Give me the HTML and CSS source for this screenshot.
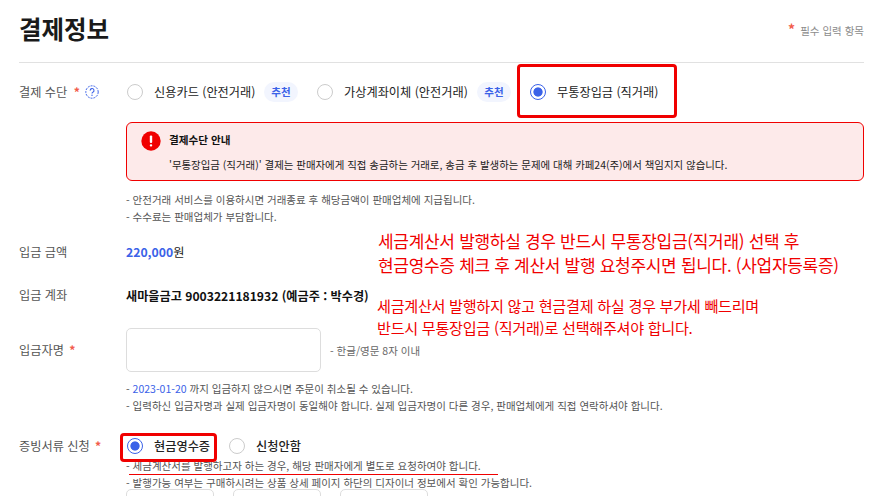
FILE: index.html
```html
<!DOCTYPE html>
<html lang="ko">
<head>
<meta charset="utf-8">
<title>결제정보</title>
<link rel="stylesheet" href="styles.css">
</head>
<body>
<main class="page">
  <header class="head">
    <h1 class="title">결제정보</h1>
    <p class="req-note"><span class="star star-big">*</span> 필수 입력 항목</p>
  </header>

  <section class="row row-method">
    <div class="label">결제 수단 <span class="star">*</span>
      <svg class="help" viewBox="0 0 14 14" width="14" height="14"><circle cx="7" cy="7" r="6.2" fill="none" stroke="#3b62e8" stroke-width="1" stroke-dasharray="2 1"/><path d="M5.2 5.6a1.9 1.9 0 1 1 2.7 1.6c-.6.3-.9.6-.9 1.3" fill="none" stroke="#3b62e8" stroke-width="1.1"/><circle cx="7" cy="10.2" r=".7" fill="#3b62e8"/></svg>
    </div>
    <div class="options">
      <span class="radio"></span><span class="opt-text w-card">신용카드 (안전거래)</span><span class="badge">추천</span>
      <span class="radio"></span><span class="opt-text w-virtual">가상계좌이체 (안전거래)</span><span class="badge">추천</span>
      <span class="radio checked"></span><span class="opt-text">무통장입금 (직거래)</span>
    </div>
    <div class="mark mark-bank"></div>
  </section>

  <section class="alert">
    <svg class="alert-icon" viewBox="0 0 20 20" width="20" height="20"><circle cx="10" cy="10" r="9.7" fill="#f00000"/><rect x="8.8" y="4.6" width="2.4" height="7.4" rx="1" fill="#fff"/><rect x="8.8" y="13.2" width="2.4" height="2.4" rx="1" fill="#fff"/></svg>
    <div>
      <h2 class="alert-title">결제수단 안내</h2>
      <p class="alert-body">'무통장입금 (직거래)' 결제는 판매자에게 직접 송금하는 거래로, 송금 후 발생하는 문제에 대해 카페24(주)에서 책임지지 않습니다.</p>
    </div>
  </section>

  <ul class="notes notes-method">
    <li>- 안전거래 서비스를 이용하시면 거래종료 후 해당금액이 판매업체에 지급됩니다.</li>
    <li>- 수수료는 판매업체가 부담합니다.</li>
  </ul>

  <section class="row row-amount">
    <div class="label">입금 금액</div>
    <div class="amount"><b>220,000</b>원</div>
  </section>

  <section class="row row-account">
    <div class="label">입금 계좌</div>
    <div class="account">새마을금고 9003221181932 (예금주 : 박수경)</div>
  </section>

  <section class="row row-name">
    <div class="label">입금자명 <span class="star star-gap">*</span></div>
    <div class="name-box"></div>
    <span class="hint">- 한글/영문 8자 이내</span>
  </section>

  <ul class="notes notes-name">
    <li>- <span class="date">2023-01-20</span> 까지 입금하지 않으시면 주문이 취소될 수 있습니다.</li>
    <li>- 입력하신 입금자명과 실제 입금자명이 동일해야 합니다. 실제 입금자명이 다른 경우, 판매업체에게 직접 연락하셔야 합니다.</li>
  </ul>

  <section class="row row-doc">
    <div class="label">증빙서류 신청 <span class="star star-gap">*</span></div>
    <div class="options">
      <span class="radio checked"></span><span class="opt-text w-cash">현금영수증</span>
      <span class="radio"></span><span class="opt-text doc-off">신청안함</span>
    </div>
    <div class="mark mark-cash"></div>
  </section>

  <ul class="notes notes-doc">
    <li>- 세금계산서를 발행하고자 하는 경우, 해당 판매자에게 별도로 요청하여야 합니다.</li>
    <li>- 발행가능 여부는 구매하시려는 상품 상세 페이지 하단의 디자이너 정보에서 확인 가능합니다.</li>
  </ul>
  <div class="underline"></div>

  <div class="fields">
    <div class="field"></div>
    <div class="field"></div>
    <div class="field"></div>
  </div>

  <aside class="memo memo-one">세금계산서 발행하실 경우 반드시 무통장입금(직거래) 선택 후<br>현금영수증 체크 후 계산서 발행 요청주시면 됩니다. (사업자등록증)</aside>
  <aside class="memo memo-two">세금계산서 발행하지 않고 현금결제 하실 경우 부가세 빼드리며<br>반드시 무통장입금 (직거래)로 선택해주셔야 합니다.</aside>
</main>
</body>
</html>
```

FILE: styles.css
```css
* { box-sizing: border-box; }
html, body { margin: 0; height: 496px; overflow: hidden; background: #fff; }
body { font-family: "Noto Sans CJK KR", "Noto Sans", sans-serif; color: #222; }
.page { position: relative; height: 496px; padding: 0 10px 0 19px; overflow: hidden; }
ul, p, h1, h2 { margin: 0; padding: 0; list-style: none; }

.head { display: flex; justify-content: space-between; align-items: center; height: 63px; border-bottom: 1px solid #e1e1e1; padding-bottom: 5px; }
.title { font-size: 24.5px; line-height: 32px; font-weight: 700; color: #1a1a1a; }
.req-note { font-size: 10.5px; color: #8c8c8c; padding-top: 3px; }
.star { color: #f25c4c; font-weight: 700; }
.star-big { margin-right: 2px; font-size: 14px; line-height: 13px; }
.star-gap { margin-left: -1px; }

.row { position: relative; display: flex; align-items: center; }
.label { flex: 0 0 108px; display: flex; align-items: center; gap: 3px; font-size: 12.2px; color: #555; white-space: pre; }
.help { margin-left: 2px; }

.options { display: flex; align-items: center; }
.radio { width: 16px; height: 16px; margin-right: 11px; border: 1px solid #ccc; border-radius: 50%; background: #fff; flex: none; }
.radio.checked { border-color: #3b62e8; background: radial-gradient(circle, #3b62e8 0 4.2px, #fff 5px); }
.opt-text { font-size: 12.2px; color: #222; white-space: nowrap; }
.badge { width: 34px; height: 20px; margin: 0 19px 0 9px; border-radius: 10px; background: #f2f5fe; color: #3b62e8; font-size: 10.5px; line-height: 20px; font-weight: 700; text-align: center; }

.row-method { height: 57px; }
.w-card { width: 101px; }
.w-virtual { width: 124px; }
.mark { position: absolute; border: 3px solid #f00000; border-radius: 4px; }
.mark-bank { left: 498px; top: 1px; width: 160px; height: 54px; }
.mark-cash { left: 101px; top: 1px; width: 97px; height: 29px; }

.alert { display: flex; gap: 8px; height: 59px; margin: 2px 0 0 107px; padding: 8px 14px; border: 1px solid #f00000; border-radius: 6px; background: #fdeaea; }
.alert-icon { flex: none; }
.alert-title { font-size: 10.6px; line-height: 18px; font-weight: 700; color: #111; }
.alert-body { margin-top: 7px; font-size: 10.45px; line-height: 18px; color: #222; white-space: nowrap; }

.notes { margin-left: 107px; font-size: 10.5px; line-height: 16.5px; color: #555; white-space: nowrap; }
.notes-method { margin-top: 11px; }
.notes-name { margin-top: 9px; }
.notes-doc { margin-top: -2px; margin-left: 107px; }
.date { color: #3b62e8; }

.row-amount { height: 30px; margin-top: 12px; }
.amount { margin-left: -1px; font-size: 12.2px; color: #222; }
.amount b { color: #3b62e8; font-weight: 700; }
.row-account { height: 30px; margin-top: 13px; }
.account { margin-left: -1px; font-size: 12.15px; font-weight: 700; color: #111; white-space: nowrap; }
.row-name { height: 44px; margin-top: 18px; }
.name-box { width: 195px; height: 44px; margin-left: -1px; border: 1px solid #ddd; border-radius: 5px; background: #fff; }
.hint { margin-left: 9px; font-size: 10.5px; color: #666; }
.row-doc { height: 28px; margin-top: 18px; }
.row-doc .radio { margin-right: 11px; }
.w-cash { width: 56px; margin-right: 19px; font-weight: 500; }
.doc-off { font-weight: 500; }

.underline { position: absolute; left: 129px; top: 474px; width: 369px; height: 1px; background: #f00000; }
.fields { display: flex; gap: 19px; margin: -2px 0 0 107px; }
.field { width: 88px; height: 30px; border: 1px solid #ddd; border-radius: 5px; }

.memo { position: absolute; color: #f00000; white-space: nowrap; letter-spacing: -0.3px; }
.memo-one { left: 378px; top: 229px; font-size: 17px; line-height: 24px; }
.memo-two { left: 377px; top: 294px; font-size: 15.15px; line-height: 22px; }
```
